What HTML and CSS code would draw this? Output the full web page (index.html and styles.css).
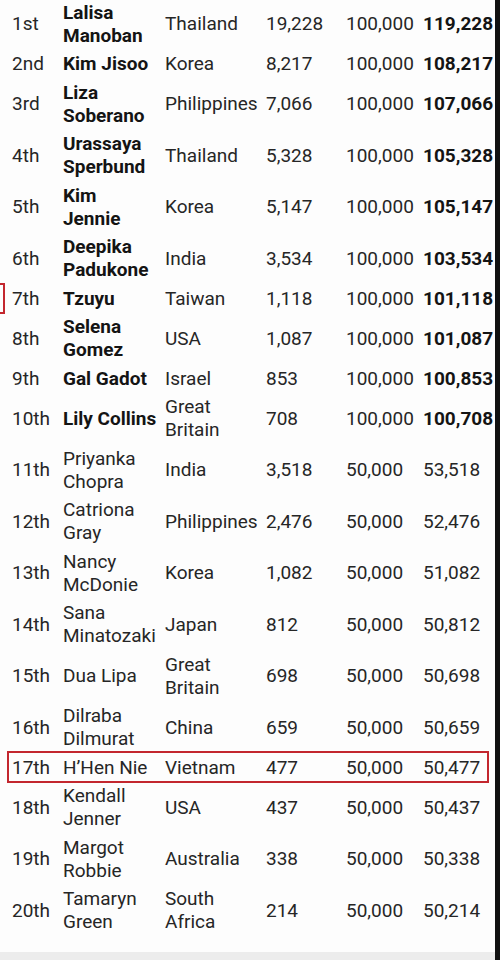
FILE: index.html
```html
<!DOCTYPE html>
<html>
<head>
<meta charset="utf-8">
<link rel="stylesheet" href="styles.css">
</head>
<body>
<div class="screen">
  <div class="main">
    <div class="table">
      <div class="row top"><span>1st</span><span class="b">Lalisa<br>Manoban</span><span>Thailand</span><span>19,228</span><span>100,000</span><span class="b">119,228</span></div>
      <div class="row"><span>2nd</span><span class="b">Kim Jisoo</span><span>Korea</span><span>8,217</span><span>100,000</span><span class="b">108,217</span></div>
      <div class="row"><span>3rd</span><span class="b">Liza<br>Soberano</span><span>Philippines</span><span>7,066</span><span>100,000</span><span class="b">107,066</span></div>
      <div class="row"><span>4th</span><span class="b">Urassaya<br>Sperbund</span><span>Thailand</span><span>5,328</span><span>100,000</span><span class="b">105,328</span></div>
      <div class="row"><span>5th</span><span class="b">Kim<br>Jennie</span><span>Korea</span><span>5,147</span><span>100,000</span><span class="b">105,147</span></div>
      <div class="row"><span>6th</span><span class="b">Deepika<br>Padukone</span><span>India</span><span>3,534</span><span>100,000</span><span class="b">103,534</span></div>
      <div class="row mark-left"><span>7th</span><span class="b">Tzuyu</span><span>Taiwan</span><span>1,118</span><span>100,000</span><span class="b">101,118</span></div>
      <div class="row"><span>8th</span><span class="b">Selena<br>Gomez</span><span>USA</span><span>1,087</span><span>100,000</span><span class="b">101,087</span></div>
      <div class="row"><span>9th</span><span class="b">Gal Gadot</span><span>Israel</span><span>853</span><span>100,000</span><span class="b">100,853</span></div>
      <div class="row"><span>10th</span><span class="b">Lily Collins</span><span>Great<br>Britain</span><span>708</span><span>100,000</span><span class="b">100,708</span></div>
      <div class="row"><span>11th</span><span>Priyanka<br>Chopra</span><span>India</span><span>3,518</span><span>50,000</span><span>53,518</span></div>
      <div class="row"><span>12th</span><span>Catriona<br>Gray</span><span>Philippines</span><span>2,476</span><span>50,000</span><span>52,476</span></div>
      <div class="row"><span>13th</span><span>Nancy<br>McDonie</span><span>Korea</span><span>1,082</span><span>50,000</span><span>51,082</span></div>
      <div class="row"><span>14th</span><span>Sana<br>Minatozaki</span><span>Japan</span><span>812</span><span>50,000</span><span>50,812</span></div>
      <div class="row"><span>15th</span><span>Dua Lipa</span><span>Great<br>Britain</span><span>698</span><span>50,000</span><span>50,698</span></div>
      <div class="row"><span>16th</span><span>Dilraba<br>Dilmurat</span><span>China</span><span>659</span><span>50,000</span><span>50,659</span></div>
      <div class="row mark"><span>17th</span><span>H’Hen Nie</span><span>Vietnam</span><span>477</span><span>50,000</span><span>50,477</span></div>
      <div class="row"><span>18th</span><span>Kendall<br>Jenner</span><span>USA</span><span>437</span><span>50,000</span><span>50,437</span></div>
      <div class="row"><span>19th</span><span>Margot<br>Robbie</span><span>Australia</span><span>338</span><span>50,000</span><span>50,338</span></div>
      <div class="row"><span>20th</span><span>Tamaryn<br>Green</span><span>South<br>Africa</span><span>214</span><span>50,000</span><span>50,214</span></div>
    </div>
    <div class="bottom-band"></div>
  </div>
  <div class="edge"></div>
</div>
</body>
</html>
```

FILE: styles.css
```css
html, body {
  margin: 0;
  padding: 0;
  background: #ffffff;
}

.screen {
  display: flex;
  width: 500px;
  height: 960px;
  overflow: hidden;
}

.main {
  flex: 1;
  display: flex;
  flex-direction: column;
  background: #fdfdfd;
  min-width: 0;
}

.table {
  flex: 1;
  margin-top: -2px;
  padding-left: 7px;
  font-family: Roboto, "Noto Sans", Arial, sans-serif;
  font-size: 19px;
  line-height: 23px;
  color: #262626;
}

.row {
  position: relative;
  display: grid;
  grid-template-columns: 51px 102px 101px 80px 77px 1fr;
  align-items: center;
  width: 482px;
  box-sizing: border-box;
  padding: 2.75px 0 2.75px 5px;
  white-space: nowrap;
}

.row span {
  display: block;
}

.b {
  font-weight: 700;
  color: #141414;
}

.mark::after {
  content: "";
  position: absolute;
  top: -2px;
  bottom: -1px;
  left: 0;
  right: 0;
  border: 2px solid #c3272e;
}

.mark-left::after {
  content: "";
  position: absolute;
  top: -1px;
  bottom: -1px;
  left: -27px;
  width: 21px;
  border: 2px solid #c3272e;
}

.bottom-band {
  height: 8px;
  background: #ececec;
}

.edge {
  width: 5px;
  background: #111111;
}
```
